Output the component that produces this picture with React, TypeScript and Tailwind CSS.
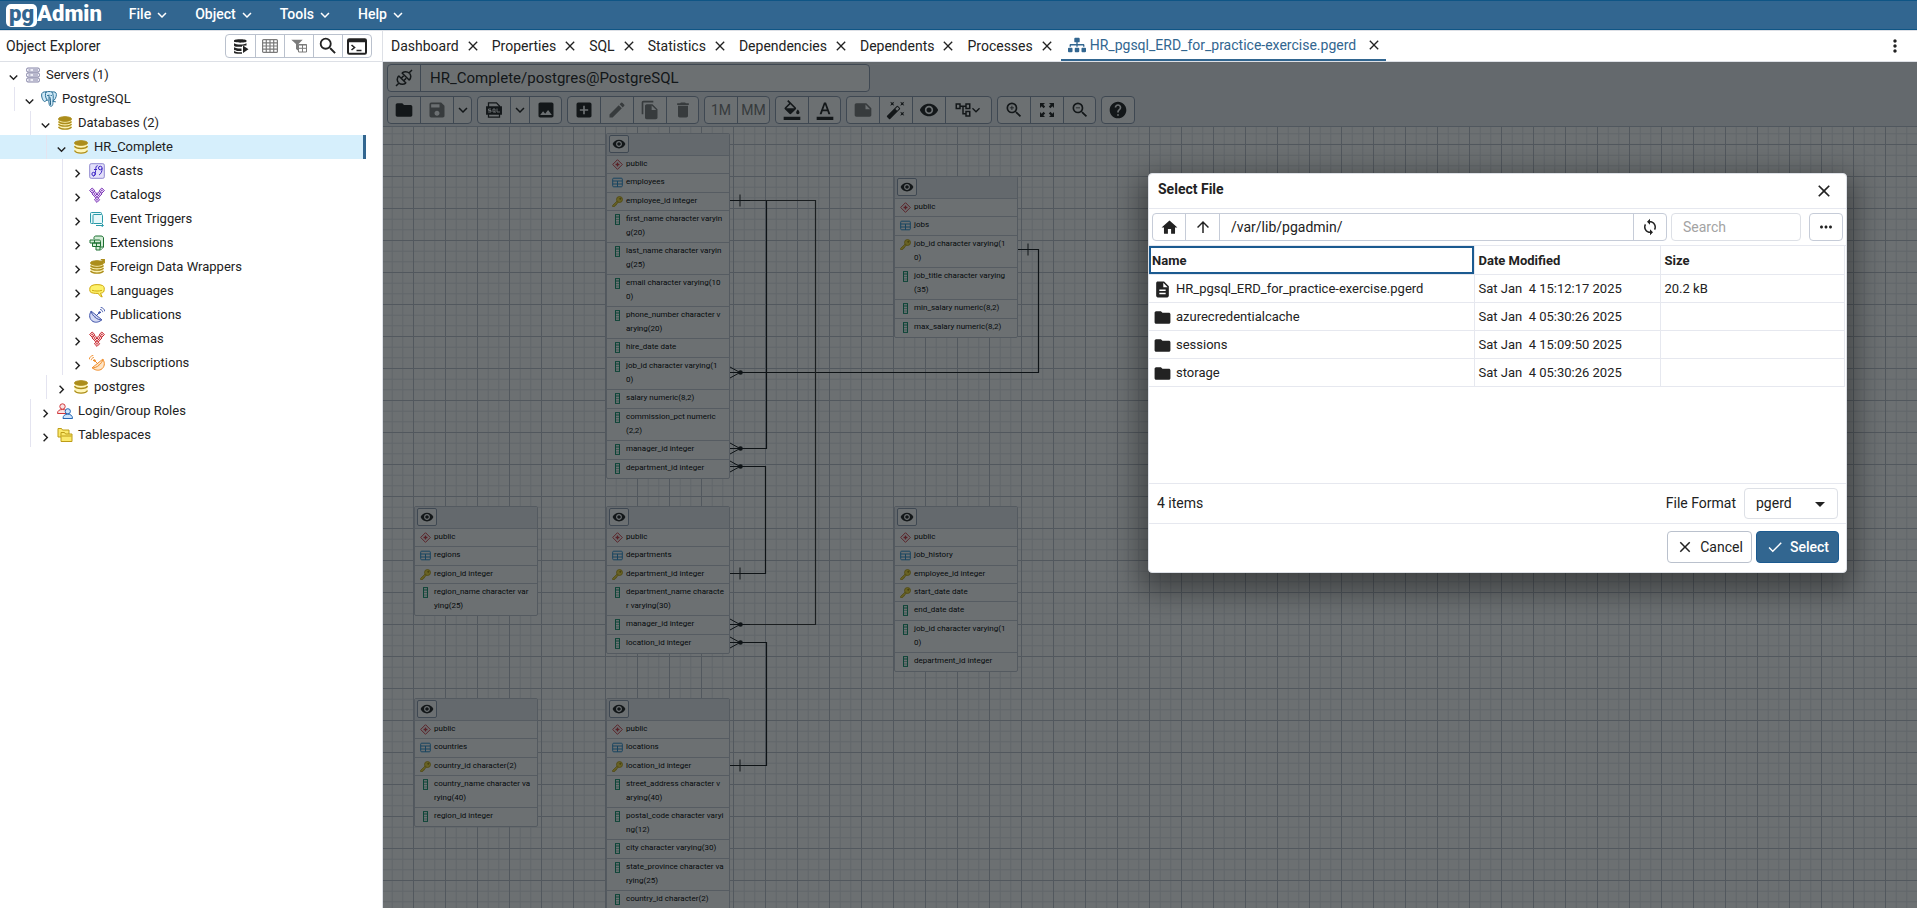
import type { ReactNode } from "react";
import {
  MdAddBox,
  MdArrowDropDown,
  MdArrowUpward,
  MdAutoFixHigh,
  MdCheck,
  MdClose,
  MdDelete,
  MdDescription,
  MdEdit,
  MdFileCopy,
  MdFolder,
  MdFormatColorFill,
  MdFormatColorText,
  MdHelp,
  MdHome,
  MdImage,
  MdKeyboardArrowDown,
  MdKeyboardArrowRight,
  MdMoreHoriz,
  MdMoreVert,
  MdNote,
  MdOutlineAccountTree,
  MdSave,
  MdSearch,
  MdSync,
  MdVisibility,
  MdZoomIn,
  MdZoomOut,
} from "react-icons/md";
import { FaSitemap } from "react-icons/fa";

/* ---------- Tree icons ---------- */

const svg16 = "size-4 shrink-0";

function ServersIcon() {
  return (
    <svg viewBox="0 0 16 16" className={svg16} fill="#eeeef6" stroke="#8584a6">
      <rect x="1.5" y="1" width="13" height="4" rx="1.5" />
      <rect x="1.5" y="6" width="13" height="4" rx="1.5" />
      <rect x="1.5" y="11" width="13" height="4" rx="1.5" />
      <path d="M3.5 3h2M3.5 8h2M3.5 13h2M8 3h5M8 8h5M8 13h5" />
    </svg>
  );
}

function ElephantIcon() {
  return (
    <svg viewBox="0 0 16 16" className={svg16} fill="none" stroke="#2c7096" strokeLinecap="round">
      <path
        fill="#cfe9f7"
        d="M5 1C2.500.3.600 1.600.600 4c0 2.500 1.500 6.500 3 6.500 1 0 1.400-1 2.400-1.500 1 .5 1.500.5 1.800 1.500.3 1.600.2 4.500 1.900 4.700 1.800.2 2.300-1.200 2.300-5.200 1.500-.5 3.500-3.800 3.400-6.500C15.400 1.200 13.500.5 11 1 9 .3 7 .3 5 1Z"
      />
      <path d="M5 1C4 3 4 6 6 9M11 1c1.500 2 1.500 5 1 9M8 4v5.500M6.500 4.500h1M10 4.500h.5M12.500 10.500l2 .3" />
      <path stroke="#1f5c80" d="M9 6.500c.5 1.500.500 5 .5 7" />
    </svg>
  );
}

function DiskIcon({ pale = false, arrow = false }: { pale?: boolean; arrow?: boolean }) {
  return (
    <svg viewBox="0 0 16 16" className={svg16} fill="none" stroke="#ac8d1b">
      <path d="M1.500 4v7.700C1.500 13.500 4.500 14.500 8 14.500s6.500-1 6.500-2.800V4" fill={pale ? "#fff6b8" : "#fbf1b5"} stroke="none" />
      <ellipse cx="8" cy="4" rx="6.500" ry="2.300" fill="#ac8d1b" />
      {pale ? (
        <path d="M1.500 7.200C2.500 9 5 9.500 8 9.500s5.500-.5 6.500-2.300M1.500 11.500c1 1.900 3.500 2.600 6.500 2.600s5.500-.7 6.500-2.600" strokeWidth="1.400" />
      ) : (
        <path d="M1.500 6.500C2.500 7.900 5 8.500 8 8.500s5.500-.6 6.500-2M1.500 9.200c1 1.400 3.500 2 6.500 2s5.500-.6 6.500-2M1.500 12c1 1.400 3.500 2.200 6.500 2.200s5.500-.8 6.500-2.200" strokeWidth="1.300" />
      )}
      {arrow && <path d="M11 5l4-4M11.800.8H15.200V4.200" strokeWidth="1.500" />}
    </svg>
  );
}

function CastsIcon() {
  return (
    <svg viewBox="0 0 16 16" className={svg16} fill="none" stroke="#3a22c4">
      <rect x=".7" y=".7" width="14.600" height="14.600" rx="1.500" fill="#e3e0fa" stroke="#8f88cf" />
      <path d="M8.700 2.700C7 2.500 6.800 4.500 6.600 7.500s-.3 5-2.300 5.800M5 6.500h3" />
      <circle cx="4.600" cy="11" r="1.700" />
      <circle cx="11.300" cy="5" r="1.800" />
      <path d="M13.100 5.200c0 3.300-.9 5.300-3 6.800" />
    </svg>
  );
}

function DiamondsIcon({ stroke, fill }: { stroke: string; fill: string }) {
  const centres = [
    [3.2, 3.6],
    [12.8, 3.6],
    [5.6, 6.9],
    [10.4, 6.9],
    [8, 9.6],
    [8, 12.8],
  ];
  return (
    <svg viewBox="0 0 16 16" className={svg16} fill={fill} stroke={stroke}>
      {centres.map(([x, y]) => (
        <g key={`${x}-${y}`}>
          <path d={`M${x} ${y - 2.6}l2.600 2.600-2.600 2.600-2.600-2.600Z`} />
          <circle cx={x} cy={y} r=".5" fill={stroke} strokeWidth=".6" />
        </g>
      ))}
    </svg>
  );
}

function EventTriggerIcon() {
  return (
    <svg viewBox="0 0 16 16" className={svg16} fill="#e8f8fa" stroke="#2a9aa8">
      <path d="M4 12.500H2.500a1 1 0 0 1-1-1v-9a1 1 0 0 1 1-1h9a1 1 0 0 1 1 1V3" />
      <rect x="4" y="3.500" width="9.500" height="9" rx="1" />
      <path d="M7 14.500h7M12.500 12.500l2 2-2 1.500" />
    </svg>
  );
}

function ExtensionsIcon() {
  return (
    <svg viewBox="0 0 16 16" className={svg16} fill="#d3ecd6" stroke="#1d7032" strokeLinejoin="round">
      <path d="M5 4V2.500C5 1.500 6 1 7 1h5c1.500 0 2.500 1 2.500 2v9l-3 3H7v-3" />
      <path d="M1 5h9c1 0 1.500.5 1.500 1.500V8H1ZM3.500 8h8v3.500h-8ZM5.500 5v3M7.500 8v3.500" />
      <path d="M11 15v-3h3.500" />
    </svg>
  );
}

function LanguagesIcon() {
  return (
    <svg viewBox="0 0 16 16" className={svg16} fill="#fdf16b" stroke="#cfa90f">
      <path d="M3 2.500C5 1.300 11 1.300 13.500 2.500c2 1 2 3 1.500 5.500-.4 1.700-2 2-3.500 2.200l1.700 3.800c-2-.6-3.200-2-3.900-3.600C6 10.500 2 10.300 1 8.500.500 6 .500 3.500 3 2.500Z" />
      <path d="M3 7.300c3 1 7 1 10 0" />
    </svg>
  );
}

function DishIcon({ stroke, fill, flip = false }: { stroke: string; fill: string; flip?: boolean }) {
  return (
    <svg viewBox="0 0 16 16" className={svg16} fill="none" stroke={stroke} strokeLinecap="round">
      <g transform={flip ? "matrix(-1 0 0 1 16 0)" : undefined}>
        <path fill={fill} d="M2 4.500C-.5 8 .5 12.500 4 14.500c3 1.500 6.500.5 8.500-1.500Z" />
        <path d="M2 4.500C3.500 9 8 13 12.500 13M7 9l4-4" />
        <circle cx="10.500" cy="5.500" r=".8" fill={stroke} />
        <path d="M11.500 2.500c1.300.3 2 1.200 2.200 2.300M12 .4c2 .4 3.500 1.800 3.700 3.600" strokeWidth=".9" />
      </g>
    </svg>
  );
}

function RolesIcon() {
  return (
    <svg viewBox="0 0 16 16" className={svg16}>
      <g fill="#fbe3e3" stroke="#d0383c">
        <circle cx="5.500" cy="3.500" r="2.700" />
        <path d="M.5 10.500c0-3 2-4 5-4s5 1 5 4Z" />
      </g>
      <g fill="#cde4fb" stroke="#2466b4">
        <circle cx="10.800" cy="8.300" r="2.600" />
        <path d="M6 15.500c0-3 2-4.300 4.800-4.300s4.700 1.300 4.700 4.300Z" />
      </g>
    </svg>
  );
}

function TablespacesIcon() {
  return (
    <svg viewBox="0 0 16 16" className={svg16} fill="#fbe96b" stroke="#bd9c17">
      <path d="M1 10V1.500h3.500L5.500 3H12v7Z" />
      <path d="M4 14.500v-9h3.500l1 1.500h6.500v7.500Z" />
      <path d="M4.500 9h10" />
    </svg>
  );
}

/* ---------- Sidebar ---------- */

type Node = { depth: number; label: string; open?: boolean; selected?: boolean; icon: ReactNode };

const nodes: Node[] = [
  { depth: 0, label: "Servers (1)", open: true, icon: <ServersIcon /> },
  { depth: 1, label: "PostgreSQL", open: true, icon: <ElephantIcon /> },
  { depth: 2, label: "Databases (2)", open: true, icon: <DiskIcon /> },
  { depth: 3, label: "HR_Complete", open: true, selected: true, icon: <DiskIcon pale /> },
  { depth: 4, label: "Casts", icon: <CastsIcon /> },
  { depth: 4, label: "Catalogs", icon: <DiamondsIcon stroke="#7b35b5" fill="#eddcfa" /> },
  { depth: 4, label: "Event Triggers", icon: <EventTriggerIcon /> },
  { depth: 4, label: "Extensions", icon: <ExtensionsIcon /> },
  { depth: 4, label: "Foreign Data Wrappers", icon: <DiskIcon arrow /> },
  { depth: 4, label: "Languages", icon: <LanguagesIcon /> },
  { depth: 4, label: "Publications", icon: <DishIcon stroke="#3c50a8" fill="#d5daf3" /> },
  { depth: 4, label: "Schemas", icon: <DiamondsIcon stroke="#c5252d" fill="#fbdede" /> },
  { depth: 4, label: "Subscriptions", icon: <DishIcon stroke="#f08a24" fill="#fde5c8" flip /> },
  { depth: 3, label: "postgres", icon: <DiskIcon pale /> },
  { depth: 2, label: "Login/Group Roles", icon: <RolesIcon /> },
  { depth: 2, label: "Tablespaces", icon: <TablespacesIcon /> },
];

const indents = ["pl-[5px]", "ml-[14px] border-l pl-[6px]", "ml-[30px] border-l pl-[6px]", "ml-[46px] border-l pl-[6px]", "ml-[62px] border-l pl-[6px]"];

function TreeRow({ node }: { node: Node }) {
  const Chevron = node.open ? MdKeyboardArrowDown : MdKeyboardArrowRight;
  return (
    <li
      role="treeitem"
      aria-selected={!!node.selected}
      aria-expanded={!!node.open}
      className={node.selected ? "mr-4 border-r-3 border-[#326690] bg-[#d6effc]" : "mr-4"}
    >
      <div className={`flex h-6 items-center border-[#e4e4f0] ${indents[node.depth]}`}>
        <Chevron className="mt-1 size-[17px] shrink-0" />
        <span className="ml-[3px] flex">{node.icon}</span>
        <span className="ml-[5px] text-[13px] whitespace-nowrap">{node.label}</span>
      </div>
    </li>
  );
}

function QueryToolIcon() {
  return (
    <svg viewBox="0 0 16 16" className="size-4" fill="#222">
      <path d="M1 2.500C1 .7 13.500.7 13.500 2.500v1C13.500 5 1 5 1 3.500ZM1 5.300c2.500 1.600 10 1.600 12.500 0v2.200L9 7.800v1H3C1.500 8.500 1 8 1 7.500ZM1 9.300c2 1.200 5 1.300 7.500 1.200V13C5 13 1 13 1 11.500ZM1 13c1.500 1 5 1.500 8 1.200v1.600C5 16 1 15.800 1 14.500Z" />
      <path d="M10 7.500l5.500 3.700L10 15Z" />
    </svg>
  );
}

function GridIcon() {
  return (
    <svg viewBox="0 0 16 14" className="h-3.5 w-4" fill="none" stroke="#7b7b7b" strokeWidth="1.200">
      <rect x=".6" y=".6" width="14.800" height="12.800" rx="1" />
      <path d="M.6 3.800h14.800M.6 7h14.800M.6 10.200h14.800M4.300.6v12.800M8 .6v12.800M11.700.6v12.800" />
    </svg>
  );
}

function FilterGridIcon() {
  return (
    <svg viewBox="0 0 16 14" className="h-3.5 w-4">
      <path d="M.3.700h11.400L7.500 5v7L5 10V5Z" fill="#7b7b7b" />
      <path d="M7.500 5.500h8v7.500h-8Z" fill="#fff" stroke="#7b7b7b" />
      <path d="M7.500 6h8M7.500 9.300h8M11.500 6v7" stroke="#7b7b7b" />
    </svg>
  );
}

function ConsoleIcon() {
  return (
    <svg viewBox="0 0 20 17" className="h-[17px] w-5" fill="none" stroke="#222" strokeWidth="2">
      <rect x="1" y="1.200" width="18" height="14.600" rx="1.200" />
      <path d="M1 3h18" strokeWidth="2.600" />
      <path d="M4.500 7l3 2.500-3 2.500M9.500 12.500h5" strokeWidth="1.600" />
    </svg>
  );
}

function Sidebar() {
  const tools = [
    { label: "Query Tool", icon: <QueryToolIcon /> },
    { label: "View Data", icon: <GridIcon /> },
    { label: "Filtered Rows", icon: <FilterGridIcon /> },
    { label: "Search Objects", icon: <MdSearch className="size-[22px]" /> },
    { label: "PSQL Tool", icon: <ConsoleIcon /> },
  ];
  return (
    <aside className="w-[383px] shrink-0 border-r border-[#dde0e6]">
      <div className="flex h-[31px] items-center border-b border-[#dde0e6] pr-2.5 pl-1.5">
        <h2 className="flex-1 text-[14px]">Object Explorer</h2>
        <div className="flex overflow-hidden rounded border border-[#bac1cd]">
          {tools.map((tool) => (
            <button
              key={tool.label}
              aria-label={tool.label}
              className="flex h-[22px] w-[29px] items-center justify-center border-l border-[#bac1cd] first:border-l-0"
            >
              {tool.icon}
            </button>
          ))}
        </div>
      </div>
      <ul role="tree" className="pt-px">
        {nodes.map((node) => (
          <TreeRow key={node.label} node={node} />
        ))}
      </ul>
    </aside>
  );
}

/* ---------- ERD toolbar ---------- */

function PlugIcon() {
  return (
    <svg viewBox="0 0 18 18" className="size-[18px]" fill="none" stroke="#222" strokeWidth="1.500">
      <path d="M1 17l2.800-2.800M14.200 3.800L17 1" />
      <path d="M3.800 6.800c-2 2.300-2 4.600-.4 6.800M3.600 6.700l7.600 7.600M3.500 13.700c2.200 2 5 2 7.500.5" />
      <path d="M14.200 11.200c2-2.300 2-4.600.4-6.800M14.400 11.300L6.800 3.700M14.500 4.300c-2.200-2-5-2-7.500-.5" />
      <path d="M6.200 9.300l2.500-2.500M8.700 11.800l2.500-2.500" />
    </svg>
  );
}

function SqlFileIcon() {
  return (
    <svg viewBox="0 0 16 16" className="size-4" fill="none" stroke="#222" strokeWidth="1.300">
      <path d="M2.500 5V.8h8L13.500 4v1M2.500 12v3.200h11V12" />
      <path d="M.7 5h14.600v7H.7Z" fill="#222" />
      <path d="M5 7H2.500v1.500H5V10H2.200M7 7h2v3H7ZM8.500 9.500l1 1.300M11 6.500V10h3" stroke="#fff" strokeWidth=".9" />
    </svg>
  );
}

function FitIcon() {
  return (
    <svg viewBox="0 0 18 18" className="size-[18px]" fill="#222">
      <path d="M2 7V2h5L5.300 3.700 7.200 5.600 5.600 7.200 3.700 5.300ZM16 7V2h-5l1.700 1.700-1.900 1.900 1.600 1.600 1.900-1.900ZM2 11v5h5l-1.700-1.700 1.900-1.900-1.600-1.600-1.900 1.900ZM16 11v5h-5l1.700-1.700-1.900-1.900 1.600-1.600 1.900 1.900Z" />
    </svg>
  );
}

type Tool = { label: string; content: ReactNode; wide?: string; off?: boolean };

const ic = "size-5";
const arrow = <MdKeyboardArrowDown className="size-[18px] shrink-0" />;

const toolGroups: Tool[][] = [
  [
    { label: "Open File", content: <MdFolder className={ic} /> },
    { label: "Save", content: <MdSave className={ic} />, off: true },
    { label: "Save options", content: arrow, wide: "w-[18px]" },
  ],
  [
    { label: "Generate SQL", content: <SqlFileIcon /> },
    { label: "SQL options", content: arrow, wide: "w-[19px]" },
    { label: "Download image", content: <MdImage className={ic} /> },
  ],
  [
    { label: "Add Table", content: <MdAddBox className={ic} /> },
    { label: "Edit Table", content: <MdEdit className={ic} />, off: true },
    { label: "Clone Table", content: <MdFileCopy className={ic} />, off: true },
    { label: "Drop", content: <MdDelete className={ic} />, off: true },
  ],
  [
    { label: "One to Many", content: "1M", off: true },
    { label: "Many to Many", content: "MM", off: true },
  ],
  [
    { label: "Fill Colour", content: <MdFormatColorFill className={ic} /> },
    { label: "Text Colour", content: <MdFormatColorText className={ic} /> },
  ],
  [
    { label: "Note", content: <MdNote className={ic} />, off: true },
    { label: "Auto Align", content: <MdAutoFixHigh className={ic} /> },
    { label: "Show Details", content: <MdVisibility className={ic} /> },
    {
      label: "Cardinality Notation",
      content: (
        <>
          <MdOutlineAccountTree className="size-[18px] shrink-0" />
          <MdKeyboardArrowDown className="-ml-1 size-4 shrink-0" />
        </>
      ),
      wide: "w-[46px]",
    },
  ],
  [
    { label: "Zoom In", content: <MdZoomIn className={ic} /> },
    { label: "Zoom to Fit", content: <FitIcon /> },
    { label: "Zoom Out", content: <MdZoomOut className={ic} /> },
  ],
  [{ label: "Help", content: <MdHelp className={ic} /> }],
];

function ErdToolbar() {
  return (
    <div className="border-b border-[#bac1cd] bg-[#ebeef3] px-1 pt-0.5 pb-0.5">
      <div className="flex h-7 w-[483px] max-w-full overflow-hidden rounded border border-[#8f9bb0] bg-white">
        <button aria-label="Connection status" className="flex w-[33px] shrink-0 items-center justify-center border-r border-[#8f9bb0]">
          <PlugIcon />
        </button>
        <input aria-label="Connection" readOnly value="HR_Complete/postgres@PostgreSQL" className="min-w-0 flex-1 bg-transparent px-[9px] text-[15px]" />
      </div>
      <div className="mt-1 flex gap-[5px]">
        {toolGroups.map((group) => (
          <div key={group[0].label} className="flex h-7 overflow-hidden rounded border border-[#8f9bb0] bg-white">
            {group.map((tool) => (
              <button
                key={tool.label}
                aria-label={tool.label}
                disabled={tool.off}
                className={`flex items-center justify-center border-l border-[#8f9bb0] text-[14px] first:border-l-0 ${tool.wide ?? "w-[33px] first:w-8 last:w-8"} ${tool.off ? "text-[#7a7a7a]" : ""}`}
              >
                {tool.content}
              </button>
            ))}
          </div>
        ))}
      </div>
    </div>
  );
}

/* ---------- ERD canvas ---------- */

function SchemaGlyph() {
  return (
    <svg viewBox="0 0 11 11" className="size-[11px]" fill="none" stroke="#d03a45">
      <path d="M5.500.7l4.800 4.800-4.800 4.800L.7 5.500Z" />
      <path d="M5.500 3.500v4M3.500 5.500h4" strokeWidth="1.400" />
    </svg>
  );
}

function TableGlyph() {
  return (
    <svg viewBox="0 0 11 11" className="size-[11px]" fill="none" stroke="#2b8fd0">
      <rect x=".7" y="1.200" width="9.600" height="8.600" rx="1" />
      <path d="M.7 4h9.600M.7 7h9.600M5.500 4v5.800" />
    </svg>
  );
}

function KeyGlyph() {
  return (
    <svg viewBox="0 0 11 11" className="size-[11px]" fill="#f5dc3e" stroke="#b59a10" strokeWidth=".8">
      <path d="M5 5.200L.6 9.400v1.200h2l.4-1.200 1.200-.3.300-1.200L6.300 6.500Z" />
      <circle cx="7.500" cy="3.500" r="3" />
      <circle cx="8.300" cy="2.700" r=".7" fill="#7c690b" />
    </svg>
  );
}

function ColumnGlyph() {
  return (
    <svg viewBox="0 0 11 11" className="size-[11px]" fill="none" stroke="#12916b">
      <rect x="3.500" y=".6" width="4" height="9.800" />
      <path d="M3.500 3h4" />
      <path d="M3.500 5.500h4M3.500 8h4" strokeWidth=".5" />
    </svg>
  );
}

type Entity = { name: string; place: string; keys: string[]; columns: string[] };

const entities: Entity[] = [
  {
    name: "employees",
    place: "left-[223px] top-[6px]",
    keys: ["employee_id integer"],
    columns: [
      "first_name character varyin\ng(20)",
      "last_name character varyin\ng(25)",
      "email character varying(10\n0)",
      "phone_number character v\narying(20)",
      "hire_date date",
      "job_id character varying(1\n0)",
      "salary numeric(8,2)",
      "commission_pct numeric\n(2,2)",
      "manager_id integer",
      "department_id integer",
    ],
  },
  {
    name: "jobs",
    place: "left-[511px] top-[49px]",
    keys: ["job_id character varying(1\n0)"],
    columns: ["job_title character varying\n(35)", "min_salary numeric(8,2)", "max_salary numeric(8,2)"],
  },
  {
    name: "regions",
    place: "left-[31px] top-[379px]",
    keys: ["region_id integer"],
    columns: ["region_name character var\nying(25)"],
  },
  {
    name: "departments",
    place: "left-[223px] top-[379px]",
    keys: ["department_id integer"],
    columns: ["department_name characte\nr varying(30)", "manager_id integer", "location_id integer"],
  },
  {
    name: "job_history",
    place: "left-[511px] top-[379px]",
    keys: ["employee_id integer", "start_date date"],
    columns: ["end_date date", "job_id character varying(1\n0)", "department_id integer"],
  },
  {
    name: "countries",
    place: "left-[31px] top-[571px]",
    keys: ["country_id character(2)"],
    columns: ["country_name character va\nrying(40)", "region_id integer"],
  },
  {
    name: "locations",
    place: "left-[223px] top-[571px]",
    keys: ["location_id integer"],
    columns: [
      "street_address character v\narying(40)",
      "postal_code character varyi\nng(12)",
      "city character varying(30)",
      "state_province character va\nrying(25)",
      "country_id character(2)",
    ],
  },
];

function EntityRow({ glyph, text, height }: { glyph: ReactNode; text: string; height: string }) {
  return (
    <li className={`flex gap-[3px] border-t border-[#c9ced8] pl-[5px] ${height}`}>
      <span className="mt-[3px] h-[11px] shrink-0">{glyph}</span>
      <span className="pt-px text-[8px] leading-[14px] whitespace-pre text-black">{text}</span>
    </li>
  );
}

function EntityCard({ entity }: { entity: Entity }) {
  return (
    <section className={`absolute w-[124px] rounded-xs border border-[#c3c8d2] bg-white ${entity.place}`}>
      <div className="flex h-[21px] items-center bg-[#ebeef3] pb-px pl-0.5">
        <button aria-label={`Toggle ${entity.name}`} className="flex h-[18px] w-5 items-center justify-center rounded-xs border border-[#8f9bb0] bg-white">
          <MdVisibility className="size-3.5" />
        </button>
      </div>
      <ul>
        <EntityRow glyph={<SchemaGlyph />} text="public" height="h-[18px]" />
        <EntityRow glyph={<TableGlyph />} text={entity.name} height="h-[19px]" />
        {entity.keys.map((key) => (
          <EntityRow key={key} glyph={<KeyGlyph />} text={key} height={key.includes("\n") ? "h-8" : "h-[18px]"} />
        ))}
        {entity.columns.map((column) => (
          <EntityRow key={column} glyph={<ColumnGlyph />} text={column} height={column.includes("\n") ? "h-8" : "h-[19px]"} />
        ))}
      </ul>
    </section>
  );
}

const ones = [
  [347, 73],
  [635, 122],
  [347, 446],
  [347, 638],
];
const manys = [
  [347, 245],
  [347, 321],
  [347, 339],
  [347, 497],
  [347, 515],
];

function Links() {
  return (
    <svg className="absolute top-0 left-0 h-[780px] w-[700px]" fill="none" stroke="#15181a">
      <path d="M347 73.500H383.500V321.500H347M635 122.500H655.500V245.500H347M347 339.500H382.500V446.500H347M347 515.500H383.500V638.500H347" strokeWidth="1.200" />
      <path d="M347 73.500H432.500V497.500H347" stroke="#333" strokeWidth="1.200" />
      {ones.map(([x, y]) => (
        <path key={`one-${x}-${y}`} d={`M${x} ${y + 0.5}h20M${x + 10} ${y - 5.5}v12`} />
      ))}
      {manys.map(([x, y]) => (
        <g key={`many-${x}-${y}`}>
          <path d={`M${x} ${y + 0.5}h20M${x} ${y - 5}l10 5.500l-10 5.500`} />
          <circle cx={x + 10.5} cy={y + 0.5} r="2.300" fill="#15181a" stroke="none" />
        </g>
      ))}
    </svg>
  );
}

function Canvas() {
  return (
    <div className="relative min-h-0 flex-1 overflow-hidden bg-white">
      <svg className="absolute inset-0 size-full" aria-hidden="true">
        <defs>
          <pattern id="grid" x="30" y="17" width="32" height="32" patternUnits="userSpaceOnUse">
            <path d="M11.200 0V32M21.800 0V32M0 11.200H32M0 21.800H32" stroke="#e3e6eb" fill="none" />
            <path d="M.5 0V32M0 .5H32" stroke="#bdc2cc" fill="none" />
          </pattern>
        </defs>
        <rect width="100%" height="100%" fill="url(#grid)" />
      </svg>
      <Links />
      {entities.map((entity) => (
        <EntityCard key={entity.name} entity={entity} />
      ))}
    </div>
  );
}

/* ---------- Dialog ---------- */

const files = [
  { name: "HR_pgsql_ERD_for_practice-exercise.pgerd", date: "Sat Jan  4 15:12:17 2025", size: "20.2 kB", folder: false },
  { name: "azurecredentialcache", date: "Sat Jan  4 05:30:26 2025", size: "", folder: true },
  { name: "sessions", date: "Sat Jan  4 15:09:50 2025", size: "", folder: true },
  { name: "storage", date: "Sat Jan  4 05:30:26 2025", size: "", folder: true },
];

function SelectFileDialog() {
  return (
    <div
      role="dialog"
      aria-labelledby="dialog-title"
      className="absolute top-[111px] right-[70px] flex h-[400px] w-[699px] max-w-full flex-col rounded border border-[#dde0e6] bg-white shadow-[0_11px_30px_8px_rgba(0,0,0,0.4)]"
    >
      <header className="flex h-[35px] items-center border-b border-[#e6e8ef] pr-3 pl-[9px]">
        <h1 id="dialog-title" className="flex-1 pb-1 text-[14px] font-bold">
          Select File
        </h1>
        <button aria-label="Close">
          <MdClose className="size-5" />
        </button>
      </header>

      <div className="flex h-[37px] items-center border-b border-[#e6e8ef] px-[3px]">
        <div className="flex h-7 flex-1 overflow-hidden rounded border border-[#c6ccd8]">
          <button aria-label="Home" className="flex w-[33px] items-center justify-center border-r border-[#c6ccd8]">
            <MdHome className="size-[19px]" />
          </button>
          <button aria-label="Go Back" className="flex w-[34px] items-center justify-center border-r border-[#c6ccd8]">
            <MdArrowUpward className="size-[18px]" />
          </button>
          <input aria-label="Path" defaultValue="/var/lib/pgadmin/" className="min-w-0 flex-1 px-[11px] text-[14px] outline-none" />
          <button aria-label="Refresh" className="flex w-[33px] items-center justify-center border-l border-[#c6ccd8]">
            <MdSync className="size-[18px]" />
          </button>
        </div>
        <input aria-label="Search" placeholder="Search" className="ml-1 h-7 w-[130px] rounded border border-[#dde0e6] px-[11px] text-[14px] outline-none placeholder:text-[#a3a3a3]" />
        <button aria-label="Options" className="ml-2 flex h-7 w-[34px] items-center justify-center rounded border border-[#c6ccd8]">
          <MdMoreHoriz className="size-[18px]" />
        </button>
      </div>

      <div className="min-h-0 flex-1 pr-px">
        <table className="w-full table-fixed border-collapse text-left text-[13px]">
          <colgroup>
            <col className="w-[325px]" />
            <col className="w-[186px]" />
            <col />
          </colgroup>
          <thead>
            <tr className="h-7 border-b border-[#e6e8ef] text-[13px]">
              <th scope="col" className="pt-0.5 pl-[3px] outline-2 -outline-offset-2 outline-[#1b5a90]">
                Name
              </th>
              <th scope="col" className="border-x border-[#e6e8ef] pt-0.5 pl-1">
                Date Modified
              </th>
              <th scope="col" className="border-r border-[#e6e8ef] pt-0.5 pl-1">
                Size
              </th>
            </tr>
          </thead>
          <tbody>
            {files.map((file) => (
              <tr key={file.name} className="h-7 border-b border-[#e6e8ef]">
                <td className="pt-0.5 pl-1">
                  <span className="flex items-center gap-1">
                    {file.folder ? <MdFolder className="size-[19px]" /> : <MdDescription className="size-[19px]" />}
                    <span>{file.name}</span>
                  </span>
                </td>
                <td className="border-x border-[#e6e8ef] pt-0.5 pl-1 whitespace-pre">{file.date}</td>
                <td className="border-r border-[#e6e8ef] pt-0.5 pl-1">{file.size}</td>
              </tr>
            ))}
          </tbody>
        </table>
      </div>

      <div className="flex h-10 items-center border-t border-[#e6e8ef] pr-2 pl-2 text-[14px]">
        <span className="flex-1">4 items</span>
        <label htmlFor="file-format">File Format</label>
        <span className="relative ml-2 flex items-center">
          <select id="file-format" className="h-[31px] w-[94px] appearance-none rounded border border-[#dde0e6] pl-[11px] text-[14px]" defaultValue="pgerd">
            <option value="pgerd">pgerd</option>
            <option value="all">All Files</option>
          </select>
          <MdArrowDropDown className="pointer-events-none absolute right-1.5 size-6" />
        </span>
      </div>

      <footer className="flex h-[49px] items-center justify-end gap-1 border-t border-[#e6e8ef] pr-[7px] pb-0.5 text-[14px]">
        <button className="flex h-8 w-[85px] items-center justify-center gap-1.5 rounded border border-[#bac1cd]">
          <MdClose className="size-[18px]" />
          Cancel
        </button>
        <button className="flex h-8 w-[83px] items-center justify-center gap-1.5 rounded border border-[#1b5a90] bg-[#326690] font-medium text-white">
          <MdCheck className="size-[18px]" />
          Select
        </button>
      </footer>
    </div>
  );
}

/* ---------- Page ---------- */

const tabs = ["Dashboard", "Properties", "SQL", "Statistics", "Dependencies", "Dependents", "Processes"];

function TabBar() {
  return (
    <nav className="flex h-[31px] items-stretch border-b border-[#dde0e6] pl-px text-[14px]">
      {tabs.map((tab) => (
        <div key={tab} className="flex items-center gap-1.5 pr-1 pl-[7px]">
          <button>{tab}</button>
          <button aria-label={`Close ${tab}`}>
            <MdClose className="size-4" />
          </button>
        </div>
      ))}
      <div className="ml-0.5 flex items-center gap-2.5 border-b-2 border-[#326690] pr-1 pl-[7px]">
        <button className="flex items-center gap-1 text-[#326690]">
          <FaSitemap className="size-[18px]" />
          HR_pgsql_ERD_for_practice-exercise.pgerd
        </button>
        <button aria-label="Close ERD">
          <MdClose className="size-4" />
        </button>
      </div>
      <button aria-label="More tabs" className="mr-3 ml-auto">
        <MdMoreVert className="size-5" />
      </button>
    </nav>
  );
}

const menus = ["File", "Object", "Tools", "Help"];

export default function App() {
  return (
    <div className="flex h-screen flex-col overflow-hidden bg-white font-['Roboto',sans-serif] text-[#222222]">
      <header className="flex h-[30px] shrink-0 items-center border-y border-[#0f5585] bg-[#326690] pl-1.5 text-white">
        <div className="flex items-center text-[22px] leading-none font-black">
          <span className="flex h-[23px] items-center rounded-[5px] bg-white px-[3px] pb-0.5 text-[#326690]">pg</span>
          <span className="pb-0.5">Admin</span>
        </div>
        <nav className="ml-[27px] flex gap-6 pb-0.5">
          {menus.map((menu) => (
            <button key={menu} className="flex items-center gap-0.5 text-[14px] font-medium">
              {menu}
              <MdKeyboardArrowDown className="mt-0.5 size-[18px]" />
            </button>
          ))}
        </nav>
      </header>
      <div className="flex min-h-0 flex-1 border-t border-[#dde0e6]">
        <Sidebar />
        <main className="flex min-w-0 flex-1 flex-col">
          <TabBar />
          <div className="relative flex min-h-0 flex-1 flex-col overflow-hidden">
            <ErdToolbar />
            <Canvas />
            <div className="absolute inset-0 bg-[rgba(10,16,20,0.6)]" />
            <SelectFileDialog />
          </div>
        </main>
      </div>
    </div>
  );
}
